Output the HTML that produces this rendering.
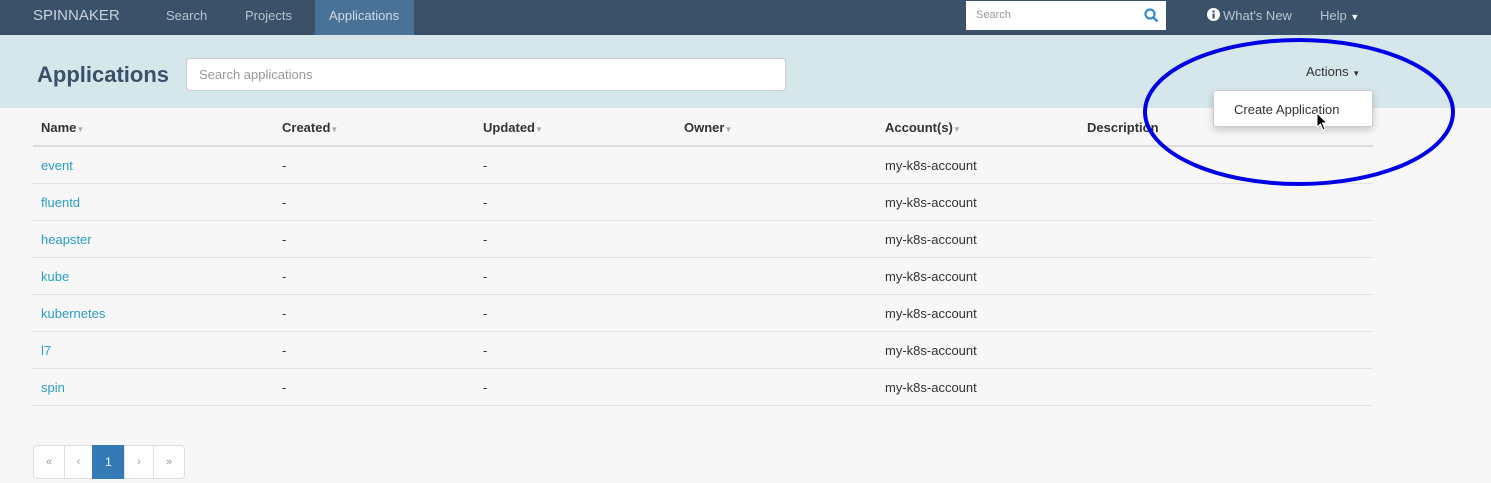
<!DOCTYPE html>
<html><head><style>
*{box-sizing:border-box;margin:0;padding:0}
body{width:1491px;height:483px;overflow:hidden;background:#f7f7f7;font-family:"Liberation Sans",sans-serif;position:relative;font-size:13px;color:#333}
.nav{position:absolute;left:0;top:0;width:1491px;height:35px;background:#3a5169}
.nav span{position:absolute;top:8px;color:#b7c4d1;font-size:13px}
.tab{position:absolute;left:315px;top:0;width:99px;height:35px;background:#4a7196}
.srch{position:absolute;left:966px;top:1px;width:200px;height:29px;background:#fff}
.band{position:absolute;left:0;top:35px;width:1491px;height:73px;background:#d6e7ec}
.cell{position:absolute;font-size:13px}
.hd{font-weight:bold;color:#333}
.hd i{font-style:normal;color:#aaa;font-size:8px}
.link{color:#2a9fc0}
.line{position:absolute;left:33px;width:1340px;height:1px;background:#e2e2e2}
.pg{position:absolute;top:445px;height:34px;background:#fff;border:1px solid #ddd;color:#999;font-size:11px;text-align:center;line-height:32px}
</style></head><body>
<div class="nav">
<div class="tab"></div>
<span style="left:33px;font-size:15px;top:7px;color:#c8d2dc">SPINNAKER</span>
<span style="left:166px">Search</span>
<span style="left:245px">Projects</span>
<span style="left:329px;color:#d0dae4">Applications</span>
<div class="srch"><span style="left:10px;top:8px;color:#999;font-size:11px">Search</span>
<svg style="position:absolute;left:178px;top:7px" width="15" height="15" viewBox="0 0 15 15"><circle cx="6" cy="6" r="4.5" fill="none" stroke="#3a8bd0" stroke-width="2.2"/><line x1="9.5" y1="9.5" x2="13.5" y2="13.5" stroke="#3a8bd0" stroke-width="2.6"/></svg></div>
<svg style="position:absolute;left:1207px;top:8px" width="13" height="13"><circle cx="6.5" cy="6.5" r="6.5" fill="#fff"/><rect x="5.5" y="5.5" width="2.2" height="5" fill="#3a5169"/><rect x="5.5" y="2.5" width="2.2" height="2" fill="#3a5169"/></svg>
<span style="left:1223px">What's New</span>
<span style="left:1320px">Help <span style="position:static;font-size:9px;color:#fff">▼</span></span>
</div>
<div class="band">
<div style="position:absolute;left:37px;top:27px;font-size:22px;font-weight:bold;color:#3a5169">Applications</div>
<div style="position:absolute;left:186px;top:23px;width:600px;height:33px;background:#fff;border:1px solid #ccc;border-radius:4px;padding:8px 12px;color:#999;font-size:13px">Search applications</div>
<div style="position:absolute;left:1306px;top:29px;font-size:13px;color:#333">Actions <span style="font-size:8px">▼</span></div>
</div>
<div class="cell hd" style="left:41px;top:120px">Name<i>▼</i></div>
<div class="cell hd" style="left:282px;top:120px">Created<i>▼</i></div>
<div class="cell hd" style="left:483px;top:120px">Updated<i>▼</i></div>
<div class="cell hd" style="left:684px;top:120px">Owner<i>▼</i></div>
<div class="cell hd" style="left:885px;top:120px">Account(s)<i>▼</i></div>
<div class="cell hd" style="left:1087px;top:120px">Description</div>
<div class="line" style="top:145px;height:2px;background:#ddd"></div>

<div class="cell link" style="left:41px;top:158px">event</div><div class="cell" style="left:282px;top:158px">-</div><div class="cell" style="left:483px;top:158px">-</div><div class="cell" style="left:885px;top:158px">my-k8s-account</div><div class="line" style="top:183px"></div>
<div class="cell link" style="left:41px;top:195px">fluentd</div><div class="cell" style="left:282px;top:195px">-</div><div class="cell" style="left:483px;top:195px">-</div><div class="cell" style="left:885px;top:195px">my-k8s-account</div><div class="line" style="top:220px"></div>
<div class="cell link" style="left:41px;top:232px">heapster</div><div class="cell" style="left:282px;top:232px">-</div><div class="cell" style="left:483px;top:232px">-</div><div class="cell" style="left:885px;top:232px">my-k8s-account</div><div class="line" style="top:257px"></div>
<div class="cell link" style="left:41px;top:269px">kube</div><div class="cell" style="left:282px;top:269px">-</div><div class="cell" style="left:483px;top:269px">-</div><div class="cell" style="left:885px;top:269px">my-k8s-account</div><div class="line" style="top:294px"></div>
<div class="cell link" style="left:41px;top:306px">kubernetes</div><div class="cell" style="left:282px;top:306px">-</div><div class="cell" style="left:483px;top:306px">-</div><div class="cell" style="left:885px;top:306px">my-k8s-account</div><div class="line" style="top:331px"></div>
<div class="cell link" style="left:41px;top:343px">l7</div><div class="cell" style="left:282px;top:343px">-</div><div class="cell" style="left:483px;top:343px">-</div><div class="cell" style="left:885px;top:343px">my-k8s-account</div><div class="line" style="top:368px"></div>
<div class="cell link" style="left:41px;top:380px">spin</div><div class="cell" style="left:282px;top:380px">-</div><div class="cell" style="left:483px;top:380px">-</div><div class="cell" style="left:885px;top:380px">my-k8s-account</div><div class="line" style="top:405px"></div>

<div class="pg" style="left:33px;width:32px;border-radius:4px 0 0 4px">«</div>
<div class="pg" style="left:64px;width:29px">‹</div>
<div class="pg" style="left:92px;width:33px;background:#337ab7;border-color:#337ab7;color:#fff;font-size:12px">1</div>
<div class="pg" style="left:124px;width:30px">›</div>
<div class="pg" style="left:153px;width:32px;border-radius:0 4px 4px 0">»</div>

<div style="position:absolute;left:1213px;top:90px;width:160px;height:37px;background:#fff;border:1px solid #ccc;border-radius:3px;box-shadow:0 3px 8px rgba(0,0,0,.2)"><div style="position:absolute;left:20px;top:11px;font-size:13px;color:#333">Create Application</div></div>
<svg style="position:absolute;left:1316px;top:112px" width="14" height="20"><path d="M1 1 L1 15 L4.5 12 L7 18 L9 17 L6.5 11 L11 11 Z" fill="#000" stroke="#fff" stroke-width="1"/></svg>
<svg style="position:absolute;left:0;top:0" width="1491" height="483"><ellipse cx="1299" cy="112" rx="154" ry="72" fill="none" stroke="#0000e6" stroke-width="4"/></svg>
</body></html>
